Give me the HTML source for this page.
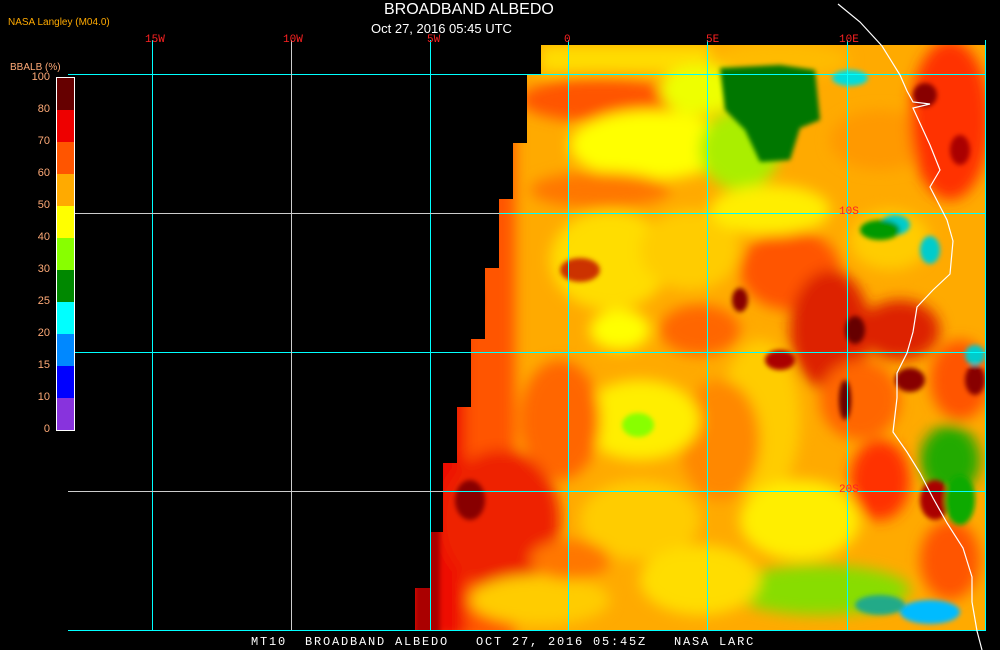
<!DOCTYPE html>
<html><head><style>
html,body{margin:0;padding:0;background:#000;width:1000px;height:650px;overflow:hidden;font-family:"Liberation Sans",sans-serif}
.t{position:absolute;white-space:pre}
.m{font-family:"Liberation Mono",monospace;font-size:11px;color:#ff2222}
</style></head><body>
<svg width="1000" height="650" style="position:absolute;left:0;top:0">
<defs>
<clipPath id="c"><polygon points="541,45 985,45 985,630 415,630 415,588 430,588 430,532 443,532 443,463 457,463 457,407 471,407 471,339 485,339 485,268 499,268 499,199 513,199 513,143 527,143 527,74 541,74"/></clipPath>
<filter id="b" x="-50%" y="-50%" width="200%" height="200%"><feGaussianBlur stdDeviation="7"/></filter>
<filter id="b2" x="-50%" y="-50%" width="200%" height="200%"><feGaussianBlur stdDeviation="2.5"/></filter>
</defs>
<g clip-path="url(#c)">
<rect x="400" y="40" width="600" height="600" fill="#ffaa00"/>
<g filter="url(#b)">
<rect x="400" y="40" width="70" height="600" fill="#ee1100"/>
<rect x="465" y="40" width="50" height="600" fill="#ff5500"/>
<rect x="540" y="45" width="170" height="28" fill="#ffdd00"/>
<ellipse cx="600" cy="100" rx="80" ry="22" fill="#ff5500"/>
<ellipse cx="650" cy="145" rx="80" ry="35" fill="#ffff00"/>
<ellipse cx="700" cy="90" rx="40" ry="25" fill="#eeff00"/>
<ellipse cx="600" cy="190" rx="70" ry="18" fill="#ff7700"/>
<ellipse cx="610" cy="260" rx="60" ry="50" fill="#ffdd00"/>
<ellipse cx="690" cy="250" rx="50" ry="40" fill="#ffcc00"/>
<ellipse cx="740" cy="150" rx="40" ry="40" fill="#aaee00"/>
<ellipse cx="780" cy="60" rx="70" ry="18" fill="#ffbb00"/>
<ellipse cx="880" cy="140" rx="50" ry="30" fill="#ff9900"/>
<ellipse cx="950" cy="120" rx="40" ry="80" fill="#ff3300"/>
<ellipse cx="700" cy="330" rx="40" ry="25" fill="#ff6600"/>
<ellipse cx="620" cy="330" rx="30" ry="20" fill="#ffff00"/>
<ellipse cx="790" cy="270" rx="50" ry="40" fill="#ff5500"/>
<ellipse cx="770" cy="210" rx="60" ry="25" fill="#ffee00"/>
<ellipse cx="890" cy="240" rx="40" ry="30" fill="#ffcc00"/>
<ellipse cx="830" cy="330" rx="40" ry="60" fill="#dd2200"/>
<ellipse cx="900" cy="330" rx="40" ry="30" fill="#dd2200"/>
<ellipse cx="960" cy="380" rx="30" ry="40" fill="#ff5500"/>
<ellipse cx="860" cy="400" rx="40" ry="40" fill="#ff6600"/>
<ellipse cx="760" cy="420" rx="40" ry="80" fill="#ffcc00"/>
<ellipse cx="720" cy="440" rx="40" ry="60" fill="#ff8800"/>
<ellipse cx="640" cy="420" rx="60" ry="40" fill="#ffee00"/>
<ellipse cx="560" cy="420" rx="40" ry="60" fill="#ff6600"/>
<ellipse cx="500" cy="520" rx="60" ry="70" fill="#ee2200"/>
<ellipse cx="800" cy="520" rx="60" ry="40" fill="#ffee00"/>
<ellipse cx="640" cy="520" rx="60" ry="40" fill="#ffcc00"/>
<ellipse cx="880" cy="480" rx="30" ry="40" fill="#ff3300"/>
<ellipse cx="950" cy="460" rx="30" ry="35" fill="#22aa00"/>
<ellipse cx="950" cy="560" rx="30" ry="40" fill="#ff5500"/>
<ellipse cx="820" cy="590" rx="90" ry="25" fill="#88dd00"/>
<ellipse cx="700" cy="580" rx="60" ry="35" fill="#ffdd00"/>
<ellipse cx="540" cy="600" rx="70" ry="25" fill="#ffcc00"/>
<ellipse cx="570" cy="560" rx="40" ry="20" fill="#ff7700"/>
</g>
<g filter="url(#b2)">
<rect x="415" y="60" width="25" height="580" fill="#aa0000"/>
<polygon points="720,68 780,65 815,70 820,120 800,128 790,160 760,162 745,130 725,110" fill="#007700"/>
<ellipse cx="850" cy="78" rx="18" ry="8" fill="#00dddd"/>
<ellipse cx="895" cy="225" rx="15" ry="10" fill="#00cccc"/>
<ellipse cx="930" cy="250" rx="10" ry="14" fill="#00cccc"/>
<ellipse cx="880" cy="230" rx="20" ry="10" fill="#009900"/>
<ellipse cx="638" cy="425" rx="16" ry="12" fill="#88ff00"/>
<ellipse cx="925" cy="95" rx="12" ry="12" fill="#880000"/>
<ellipse cx="960" cy="150" rx="10" ry="15" fill="#aa0000"/>
<ellipse cx="855" cy="330" rx="10" ry="14" fill="#660000"/>
<ellipse cx="845" cy="400" rx="6" ry="20" fill="#660000"/>
<ellipse cx="740" cy="300" rx="8" ry="12" fill="#880000"/>
<ellipse cx="780" cy="360" rx="15" ry="10" fill="#aa0000"/>
<ellipse cx="910" cy="380" rx="15" ry="12" fill="#880000"/>
<ellipse cx="975" cy="380" rx="10" ry="15" fill="#880000"/>
<ellipse cx="935" cy="500" rx="15" ry="20" fill="#aa0000"/>
<ellipse cx="960" cy="500" rx="15" ry="25" fill="#11aa00"/>
<ellipse cx="975" cy="355" rx="10" ry="10" fill="#00cccc"/>
<ellipse cx="930" cy="612" rx="30" ry="12" fill="#00bbff"/>
<ellipse cx="880" cy="605" rx="25" ry="10" fill="#22aa88"/>
<ellipse cx="470" cy="300" rx="12" ry="25" fill="#660000"/>
<ellipse cx="470" cy="500" rx="15" ry="20" fill="#880000"/>
<ellipse cx="580" cy="270" rx="20" ry="12" fill="#cc3300"/>
</g>
</g>
<g stroke="#00ffff" stroke-width="1">
<line x1="152.5" y1="40" x2="152.5" y2="630"/>
<line x1="430.5" y1="40" x2="430.5" y2="630"/>
<line x1="568.5" y1="40" x2="568.5" y2="630"/>
<line x1="707.5" y1="40" x2="707.5" y2="630"/>
<line x1="847.5" y1="40" x2="847.5" y2="630"/>
<line x1="985.5" y1="40" x2="985.5" y2="630"/>
<line x1="68" y1="74.5" x2="986" y2="74.5"/>
<line x1="68" y1="352.5" x2="986" y2="352.5"/>
<line x1="68" y1="630.5" x2="986" y2="630.5"/>
<line x1="499" y1="213.5" x2="986" y2="213.5"/>
<line x1="443" y1="491.5" x2="986" y2="491.5"/>
</g>
<g stroke="#cccccc" stroke-width="1">
<line x1="291.5" y1="40" x2="291.5" y2="630"/>
<line x1="68" y1="213.5" x2="499" y2="213.5"/>
<line x1="68" y1="491.5" x2="443" y2="491.5"/>
</g>
<polyline fill="none" stroke="#fff" stroke-width="1.2" points="838,4 860,22 882,46 900,75 907,91 913,102 930,104 913,108 930,145 940,170 930,187 947,220 953,241 950,274 933,290 917,307 913,332 907,353 897,373 897,398 893,432 907,452 920,473 933,498 947,523 963,548 972,577 972,602 977,631 982,650"/>
<g>
<rect x="56.5" y="77.5" width="18" height="353" fill="none" stroke="#fff"/>
<rect x="57" y="78" width="17" height="32" fill="#660000"/>
<rect x="57" y="110" width="17" height="32" fill="#ee0000"/>
<rect x="57" y="142" width="17" height="32" fill="#ff5500"/>
<rect x="57" y="174" width="17" height="32" fill="#ffaa00"/>
<rect x="57" y="206" width="17" height="32" fill="#ffff00"/>
<rect x="57" y="238" width="17" height="32" fill="#88ff00"/>
<rect x="57" y="270" width="17" height="32" fill="#008800"/>
<rect x="57" y="302" width="17" height="32" fill="#00ffff"/>
<rect x="57" y="334" width="17" height="32" fill="#0088ff"/>
<rect x="57" y="366" width="17" height="32" fill="#0000ff"/>
<rect x="57" y="398" width="17" height="32" fill="#8833dd"/>
</g>
</svg>
<div class="t" style="left:384px;top:1px;color:#fff;font-size:16px">BROADBAND ALBEDO</div>
<div class="t" style="left:371px;top:21px;color:#fff;font-size:13px">Oct 27, 2016 05:45 UTC</div>
<div class="t" style="left:8px;top:17px;color:#ffaa00;font-size:10px">NASA Langley (M04.0)</div>
<div class="t" style="left:10px;top:62px;color:#ffaa77;font-size:10px">BBALB (%)</div>
<div style="position:absolute;left:20px;top:61px;width:30px;color:#ffaa77;font-size:11px;text-align:right;line-height:32px">100<br>80<br>70<br>60<br>50<br>40<br>30<br>25<br>20<br>15<br>10<br>0</div>
<div class="t m" style="left:145px;top:34px">15W</div>
<div class="t m" style="left:283px;top:34px">10W</div>
<div class="t m" style="left:427px;top:34px">5W</div>
<div class="t m" style="left:564px;top:34px">0</div>
<div class="t m" style="left:706px;top:34px">5E</div>
<div class="t m" style="left:839px;top:34px">10E</div>
<div class="t m" style="left:839px;top:206px">10S</div>
<div class="t m" style="left:839px;top:484px">20S</div>
<div class="t" style="left:251px;top:635px;color:#fff;font-size:12px;font-family:'Liberation Mono',monospace;letter-spacing:1.8px">MT10  BROADBAND ALBEDO   OCT 27, 2016 05:45Z   NASA LARC</div>
</body></html>
